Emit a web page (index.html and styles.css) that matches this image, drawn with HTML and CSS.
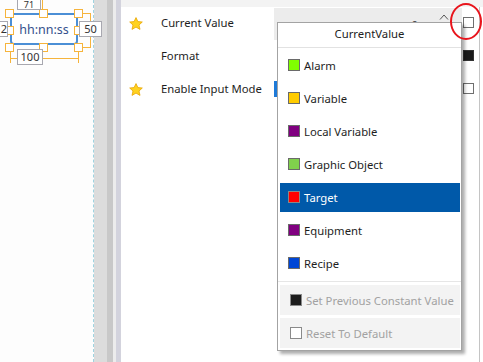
FILE: index.html
```html
<!DOCTYPE html>
<html lang="en">
<head>
  <meta charset="UTF-8" />
  <title>Property Editor</title>
  <link rel="stylesheet" href="styles.css">
</head>
<body>
  <div class="app">
    <!-- design canvas with the selected clock object -->
    <div class="canvas">
      <div class="dim-line dim-top"></div>
      <div class="dim-line dim-right"></div>
      <div class="dim-line dim-bottom"></div>
      <div class="widget">hh:nn:ss</div>
      <span class="handle h-tl"></span>
      <span class="handle h-tm"></span>
      <span class="handle h-tr"></span>
      <span class="handle h-ml"></span>
      <span class="handle h-mr"></span>
      <span class="handle h-bl"></span>
      <span class="handle h-bm"></span>
      <span class="handle h-br"></span>
      <span class="dim-label lbl-top">71</span>
      <span class="dim-label lbl-right">50</span>
      <span class="dim-label lbl-bottom">100</span>
      <span class="dim-label lbl-left">2</span>
    </div>

    <div class="splitter">
      <span class="s1"></span><span class="s2"></span><span class="s3"></span><span class="s4"></span>
    </div>

    <!-- property grid -->
    <div class="props">
      <div class="props-top"></div>

      <div class="prop-row">
        <span class="star"><svg width="14" height="13" viewBox="0 0 14 13"><polygon points="7,0.6 8.9,4.6 13.3,5 10,8 11,12.4 7,10.1 3,12.4 4,8 0.7,5 5.1,4.6" fill="#ffd21f" stroke="#e9a400" stroke-width="0.8"/></svg></span>
        <span class="prop-name">Current Value</span>
        <span class="prop-value active">
          <span class="num">0</span>
          <span class="spin">
            <svg width="10" height="6" viewBox="0 0 10 6"><polyline points="1,5.5 5,1 9,5.5" fill="none" stroke="#555" stroke-width="1"/></svg>
            <svg width="10" height="6" viewBox="0 0 10 6"><polyline points="1,0.5 5,5 9,0.5" fill="none" stroke="#555" stroke-width="1"/></svg>
          </span>
        </span>
        <span class="prop-check"><span class="box"></span></span>
        <span class="prop-edge"></span>
      </div>

      <div class="prop-row">
        <span class="star"></span>
        <span class="prop-name">Format</span>
        <span class="prop-value"></span>
        <span class="prop-check"><span class="box dark"></span></span>
        <span class="prop-edge"></span>
      </div>

      <div class="prop-row">
        <span class="star"><svg width="14" height="13" viewBox="0 0 14 13"><polygon points="7,0.6 8.9,4.6 13.3,5 10,8 11,12.4 7,10.1 3,12.4 4,8 0.7,5 5.1,4.6" fill="#ffd21f" stroke="#e9a400" stroke-width="0.8"/></svg></span>
        <span class="prop-name">Enable Input Mode</span>
        <span class="prop-value"><span class="toggle"></span></span>
        <span class="prop-check"><span class="box"></span></span>
        <span class="prop-edge"></span>
      </div>

      <div class="props-rest">
        <span class="rest-fill"></span>
        <span class="prop-edge"></span>
      </div>
    </div>
  </div>

  <!-- source picker dropdown -->
  <div class="picker">
    <div class="picker-title">CurrentValue</div>
    <ul class="picker-list">
      <li><span class="swatch" style="background:#80ff00"></span>Alarm</li>
      <li><span class="swatch" style="background:#ffcc00"></span>Variable</li>
      <li><span class="swatch" style="background:#800080"></span>Local Variable</li>
      <li><span class="swatch" style="background:#80d04c"></span>Graphic Object</li>
      <li class="selected"><span class="swatch" style="background:#ff0000"></span>Target</li>
      <li><span class="swatch" style="background:#800080"></span>Equipment</li>
      <li><span class="swatch" style="background:#0046d5"></span>Recipe</li>
    </ul>
    <div class="picker-footer">
      <div class="picker-cmd"><span class="swatch" style="background:#1c1c1c"></span>Set Previous Constant Value</div>
      <div class="picker-cmd"><span class="swatch" style="background:#ffffff"></span>Reset To Default</div>
    </div>
  </div>

  <div class="marker"></div>
</body>
</html>
```

FILE: styles.css
```css
body {
  margin: 0;
  width: 483px;
  height: 362px;
  overflow: hidden;
  background: #fff;
  font-family: "Noto Sans", "Open Sans", sans-serif;
  font-size: 11.3px;
  color: #1e1e1e;
}

.app {
  display: flex;
  height: 362px;
}

/* Canvas */

.canvas {
  position: relative;
  z-index: 1;
  width: 93px;
  background: #fdfdfd;
  border-right: 1px dashed #9ed3e0;
}

.widget {
  position: absolute;
  left: 10px;
  top: 13px;
  width: 64px;
  height: 28px;
  border: 2px solid #4b8fd6;
  border-radius: 4px;
  background: #fff;
  display: flex;
  align-items: center;
  justify-content: center;
  font-size: 12.5px;
  color: #34508c;
}

.handle {
  position: absolute;
  width: 7px;
  height: 7px;
  background: #fff;
  border: 1px solid #f6b43c;
}

.h-tl { left: 5px; top: 9px; }
.h-tm { left: 39px; top: 9px; }
.h-tr { left: 74px; top: 9px; }
.h-ml { left: 5px; top: 26px; }
.h-mr { left: 74px; top: 26px; }
.h-bl { left: 5px; top: 43px; }
.h-bm { left: 39px; top: 43px; }
.h-br { left: 74px; top: 43px; }

.dim-line {
  position: absolute;
  border-color: #f6b43c;
  border-style: solid;
  border-width: 0;
}

.dim-top {
  left: 42px;
  top: 0;
  height: 9px;
  border-left-width: 1px;
}

.dim-right {
  left: 82px;
  top: 13px;
  width: 8px;
  height: 33px;
  border-top-width: 1px;
  border-bottom-width: 1px;
  border-right-width: 1px;
}

.dim-bottom {
  left: 10px;
  top: 52px;
  width: 67px;
  height: 11px;
  border-left-width: 1px;
  border-right-width: 1px;
}

.dim-bottom::after {
  content: "";
  position: absolute;
  left: 0;
  right: 0;
  top: 6px;
  border-top: 1px solid #f6b43c;
}

.dim-label {
  position: absolute;
  height: 14px;
  line-height: 14px;
  background: #fff;
  border: 1px solid #a8a8b0;
  font-size: 11px;
  color: #333;
  text-align: center;
}

.lbl-top { left: 17px; top: 0; width: 22px; height: 9px; line-height: 10px; font-size: 9px; border-top: 0; }
.lbl-right { left: 79px; top: 21px; width: 21px; }
.lbl-bottom { left: 17px; top: 49px; width: 24px; }
.lbl-left { left: -14px; top: 21px; width: 20px; text-align: right; }

/* Splitter between canvas and grid */

.splitter {
  display: flex;
}

.s1 { width: 13px; background: #dcdcdc; }
.s2 { width: 6px; background: #c8c8c8; }
.s3 { width: 3px; background: #ececec; }
.s4 { width: 5px; background: #d3d3dd; }

/* Property grid */

.props {
  flex: 1;
  display: flex;
  flex-direction: column;
}

.props-top {
  height: 7px;
  background: #f3f3f3;
}

.prop-row {
  display: flex;
  height: 33px;
  align-items: stretch;
}

.star {
  width: 29px;
  display: flex;
  align-items: center;
  justify-content: center;
}

.prop-name {
  width: 113px;
  padding-left: 11px;
  display: flex;
  align-items: center;
  padding-bottom: 3px;
}

.prop-value {
  width: 188px;
  display: flex;
  align-items: center;
  justify-content: flex-end;
  padding-right: 13px;
  box-sizing: border-box;
}

.prop-value.active {
  background: #ececec;
  margin-top: 1px;
}

.num {
  margin-right: 21px;
  color: #333;
}

.spin {
  display: flex;
  flex-direction: column;
  gap: 6px;
  margin-top: -2px;
}

.toggle {
  margin-right: auto;
  width: 3px;
  height: 16px;
  background: #1e7ad8;
  margin-bottom: 2px;
}

.prop-check {
  width: 15px;
  display: flex;
  align-items: center;
  padding-bottom: 3px;
}

.box {
  width: 9px;
  height: 9px;
  margin-left: 1px;
  border: 1px solid #6f6f6f;
  background: #fff;
}

.box.dark {
  background: #1a1a1a;
  border-color: #333;
}

.prop-edge {
  width: 6px;
  position: relative;
}

.prop-edge::before {
  content: "";
  position: absolute;
  left: 2px;
  top: 0;
  bottom: 0;
  width: 1px;
  background: #c4c4c4;
}

.props-rest {
  flex: 1;
  display: flex;
}

.rest-fill {
  flex: 1;
}

/* Dropdown */

.picker {
  position: absolute;
  z-index: 2;
  left: 277px;
  top: 22px;
  width: 183px;
  height: 327px;
  background: #fff;
  border: 1px solid #a3a3a3;
  box-shadow: 3px 3px 3px rgba(0, 0, 0, 0.32);
}

.picker-title {
  height: 24px;
  line-height: 22px;
  text-align: center;
  border-bottom: 1px solid #e2e2e2;
  color: #222;
}

.picker-list {
  list-style: none;
  margin: 0;
  padding: 3px 1px 2px 2px;
  display: flex;
  flex-direction: column;
  gap: 4px;
}

.picker-list li {
  height: 29px;
  padding-left: 8px;
  display: flex;
  align-items: center;
  padding-bottom: 1px;
  box-sizing: border-box;
  white-space: nowrap;
}

.picker-list li.selected {
  background: #0059a9;
  color: #fff;
}

.swatch {
  width: 10px;
  height: 10px;
  border: 1px solid #6a6a6a;
  margin-right: 4px;
  flex-shrink: 0;
}

.picker-list li.selected .swatch {
  border-color: #888;
}

.picker-footer {
  margin-top: 1px;
  border-top: 1px solid #e6e6e6;
  padding-top: 3px;
  display: flex;
  flex-direction: column;
  gap: 3px;
}

.picker-cmd {
  height: 30px;
  margin: 0 1px 0 2px;
  padding-left: 10px;
  display: flex;
  align-items: center;
  background: #f3f3f3;
  color: #a2a2a2;
  white-space: nowrap;
}

.picker-cmd .swatch {
  border-color: #8a8a8a;
}

/* Highlight ring */

.marker {
  position: absolute;
  z-index: 3;
  left: 450px;
  top: 3px;
  width: 28px;
  height: 33px;
  border: 2px solid #e8141c;
  border-radius: 50%;
}
```
